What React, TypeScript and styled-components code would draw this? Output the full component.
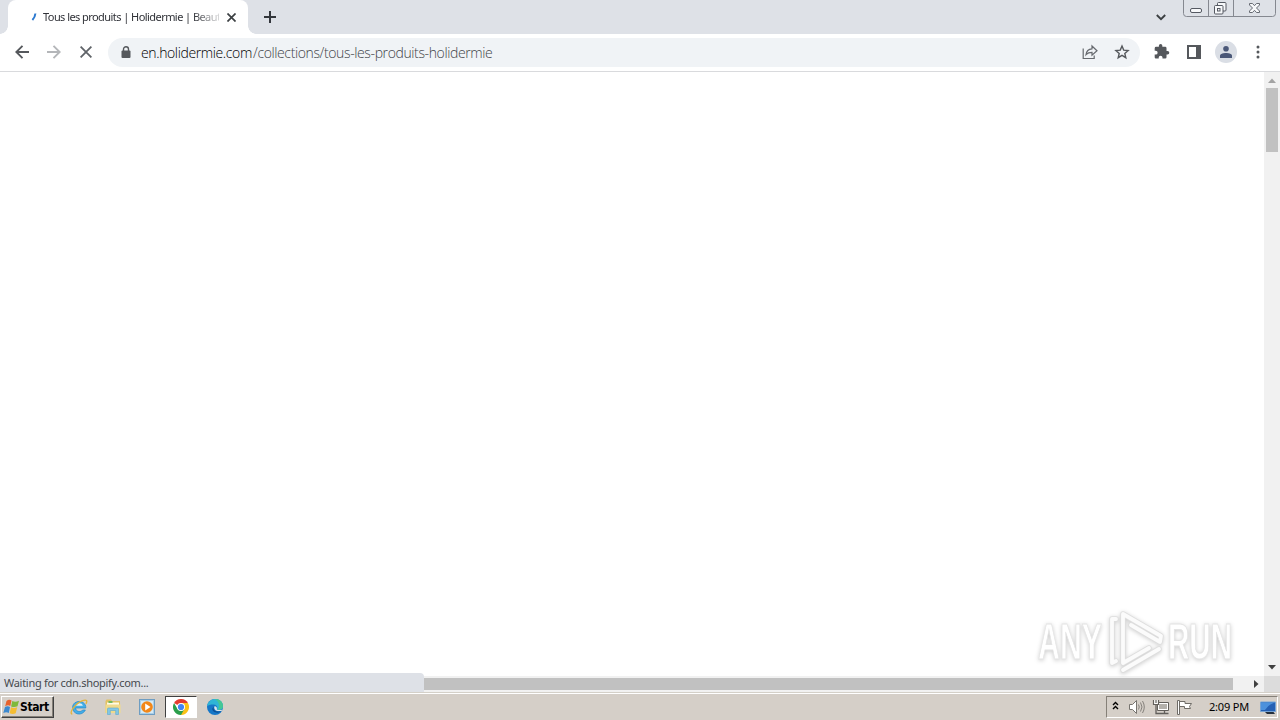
import * as React from "react";
import styled, { createGlobalStyle } from "styled-components";

const App = () => (
  <Screen>
    <GlobalStyle />
    <TabStrip>
      <TabEdge />
      <Tab>
        <Spinner />
        <TabTitle>Tous les produits | Holidermie | Beaut</TabTitle>
        <CloseIcon />
      </Tab>
      <TabEdge right />
      <NewTab>
        <svg width="12" height="12" viewBox="0 0 12 12">
          <path d="M6 0v12M0 6h12" stroke="#33363c" strokeWidth="2" />
        </svg>
      </NewTab>
      <Spacer />
      <TabSearch>
        <svg width="10" height="7" viewBox="0 0 10 7">
          <path d="M.8 1 5 5.2 9.2 1" fill="none" stroke="#3c4043" strokeWidth="1.9" />
        </svg>
      </TabSearch>
      <WindowControls />
    </TabStrip>
    <Toolbar>
      <ToolButton>
        <ArrowIcon color="#55585c" />
      </ToolButton>
      <ToolButton>
        <ArrowIcon color="#b4b6b9" flip />
      </ToolButton>
      <ToolButton>
        <svg width="12" height="12" viewBox="0 0 12 12">
          <path d="m.6.6 10.8 10.8M11.4.6.6 11.4" stroke="#5f6368" strokeWidth="1.8" />
        </svg>
      </ToolButton>
      <AddressBar>
        <LockIcon />
        <Host>en.holidermie.com</Host>
        <Path>/collections/tous-les-produits-holidermie</Path>
        <Spacer />
        <ShareIcon />
        <StarIcon />
      </AddressBar>
      <ToolButton>
        <PuzzleIcon />
      </ToolButton>
      <ToolButton>
        <svg width="14" height="14" viewBox="0 0 14 14">
          <path d="M0 0h14v14H0zM2 2v10h7V2z" fill="#55585c" fillRule="evenodd" />
        </svg>
      </ToolButton>
      <ToolButton>
        <Avatar>
          <svg width="12" height="12" viewBox="0 0 12 12" fill="#4b5878">
            <circle cx="6" cy="2.8" r="2.8" />
            <path d="M0 12V9.8C0 7.8 3.3 7 6 7s6 .8 6 2.8V12z" />
          </svg>
        </Avatar>
      </ToolButton>
      <ToolButton>
        <svg width="4" height="14" viewBox="0 0 4 14" fill="#55585c">
          <circle cx="2" cy="2" r="1.5" />
          <circle cx="2" cy="7" r="1.5" />
          <circle cx="2" cy="12" r="1.5" />
        </svg>
      </ToolButton>
    </Toolbar>
    <Viewport>
      <Page />
      <VerticalBar>
        <ScrollArrow dir="up" faded />
        <VerticalThumb />
        <Spacer />
        <ScrollArrow dir="down" />
      </VerticalBar>
      <HorizontalBar>
        <HorizontalThumb />
        <ScrollArrow dir="right" />
      </HorizontalBar>
      <Corner />
      <Status>Waiting for cdn.shopify.com...</Status>
      <Watermark />
    </Viewport>
    <Taskbar>
      <StartButton>
        <WindowsLogo />
        Start
      </StartButton>
      <QuickLaunch>
        <Task>
          <IeIcon />
        </Task>
        <Task>
          <ExplorerIcon />
        </Task>
        <Task>
          <PlayerIcon />
        </Task>
        <Task active>
          <ChromeIcon />
        </Task>
        <Task>
          <EdgeIcon />
        </Task>
      </QuickLaunch>
      <Spacer />
      <Tray>
        <TrayIcons />
        <Clock>2:09 PM</Clock>
        <DesktopIcon />
      </Tray>
    </Taskbar>
  </Screen>
);

export default App;

//////////
// Icons
//////////
const Spinner = () => (
  <svg width="16" height="16" viewBox="0 0 16 16">
    <path d="M13.4 4.5q-.4 4-3 6.500" fill="none" stroke="#2b78cf" strokeWidth="2" />
  </svg>
);

const CloseIcon = () => (
  <svg width="9" height="9" viewBox="0 0 8 8">
    <path d="m.4.4 7.2 7.2M7.6.4.4 7.6" stroke="#3c4043" strokeWidth="1.5" />
  </svg>
);

const ArrowIcon = ({ color, flip }: { color: string; flip?: boolean }) => (
  <svg width="14" height="14" viewBox="0 0 14 14">
    <path
      d="M14 7H1.5M7.5.8 1.3 7l6.2 6.2"
      transform={flip ? "translate(14) scale(-1 1)" : undefined}
      fill="none"
      stroke={color}
      strokeWidth="1.9"
    />
  </svg>
);

const LockIcon = () => (
  <svg width="10" height="13" viewBox="0 0 10 13">
    <rect x=".5" y="4.5" width="9" height="7.5" rx="1" fill="#55585c" />
    <path d="M2.5 5V3.2a2.5 2.5 0 0 1 5 0V5" fill="none" stroke="#55585c" strokeWidth="1.4" />
  </svg>
);

const ShareIcon = () => (
  <svg width="16" height="16" viewBox="0 0 16 16" fill="none" stroke="#66696e" strokeWidth="1.2">
    <path d="M1.2 4.5v10h11v-3" />
    <path d="M4 10.7c.4-3.8 2.2-5.6 6-5.9V2l5 4.7-5 4.5V8.4c-2.6 0-4.4.6-6 2.3z" />
  </svg>
);

const StarIcon = () => (
  <svg width="16" height="16" viewBox="0 0 16 16">
    <path
      d="m8 2 1.7 4.1 4.4.4-3.3 2.9 1 4.3L8 11.4l-3.8 2.3 1-4.3-3.3-2.9 4.4-.4z"
      fill="none"
      stroke="#55585c"
      strokeWidth="1.4"
    />
  </svg>
);

const PuzzleIcon = () => (
  <svg width="16" height="16" viewBox="1 1 23 23" fill="#55585c">
    <path d="M20.5 11H19V7a2 2 0 0 0-2-2h-4V3.5a2.5 2.5 0 0 0-5 0V5H4a2 2 0 0 0-2 2v3.8h1.5a2.7 2.7 0 0 1 0 5.4H2V20c0 1.100.9 2 2 2h3.8v-1.5a2.7 2.7 0 0 1 5.4 0V22H17a2 2 0 0 0 2-2v-4h1.5a2.5 2.5 0 0 0 0-5z" />
  </svg>
);

const WindowControls = () => (
  <svg width="97" height="18" viewBox="0 0 97 18" fill="none">
    <path d="M.5 0v13.5q0 3 3 3h86q3 0 3-3V0M25.5 0v16M50.5 0v16" stroke="#858890" />
    <rect x="7.5" y="8.5" width="11" height="4" rx="1.5" fill="#f7f8fa" stroke="#555962" />
    <rect x="34.5" y="2.5" width="8.5" height="8.5" rx="1" fill="#f7f8fa" stroke="#555962" />
    <rect x="31.5" y="5.5" width="8.5" height="8.5" rx="1" fill="#f7f8fa" stroke="#555962" />
    <rect x="34.5" y="8.5" width="2.5" height="2.5" stroke="#555962" />
    <path
      d="M66.5 3.500h3l2 2.200 2-2.200h3v1.500L73.500 8l3 3v1.500h-3l-2-2.200-2 2.200h-3V11l3-3-3-3z"
      fill="#f7f8fa"
      stroke="#666a72"
    />
  </svg>
);

const arrowPaths = {
  up: "M4 11 8 6.500l4 4.500z",
  down: "M4 5 8 9.500 12 5z",
  right: "M6 4v8l4.500-4z",
};

const ScrollArrow = ({ dir, faded }: { dir: keyof typeof arrowPaths; faded?: boolean }) => (
  <svg width="16" height="16" viewBox="0 0 16 16">
    <path d={arrowPaths[dir]} fill={faded ? "#a3a3a3" : "#404040"} />
  </svg>
);

const WindowsLogo = () => (
  <svg width="17" height="16" viewBox="0 0 17 16">
    <path d="M3.500 2Q6 0 8.500 1.500L7.300 7Q5 5.600 2.200 7.300z" fill="#e8622c" />
    <path d="M9.300 2q3 1.500 6.700-.3L14.500 7.200q-3 1.500-6.400.2z" fill="#7fb93b" />
    <path d="M2 8Q4.600 6.500 7 8l-1.200 6Q3.400 12.500.3 14z" fill="#3c89cf" />
    <path d="M8 8.300q3 1.400 6.200 0l-1.500 6q-3 1.500-6-.1z" fill="#f5bd32" />
  </svg>
);

const IeIcon = () => (
  <svg width="18" height="18" viewBox="0 0 18 18" fill="none">
    <path
      d="M15.800 10H5.600c.2 4 5.700 4.600 7 2h2.800C12 18.800 2.600 16.500 2.600 9.500c0-8.200 13.700-8.200 13.200.5z"
      fill="#42aee9"
      stroke="#2388ca"
      strokeWidth=".7"
    />
    <path d="M5.700 7.800C6.200 4.600 12.300 4.400 12.800 7.800z" fill="#e3eff5" />
    <path
      d="M2.300 16c-4-.5 3.200-10.700 9.700-13.200 5-2 5.600.2 3.900 3"
      stroke="#e3b43a"
      strokeWidth="1.300"
    />
  </svg>
);

const ExplorerIcon = () => (
  <svg width="18" height="18" viewBox="0 0 18 18">
    <path d="M1.500 3 2.500 1.500h4.500l1 1.500h8V15h-14.500z" fill="#e3c263" />
    <path d="M3 4.500h12V12H3z" fill="#fffbe5" />
    <path d="M4.500 3h4v2h-4z" fill="#73b960" />
    <path d="M1.500 6.500h15V15h-15z" fill="#f0da8c" />
    <path
      d="M3.500 16.500V11q0-1 1-1h9q1 0 1 1v5.500h-2.800v-4H6.300v4z"
      fill="#83c7e5"
      stroke="#5aa9cf"
      strokeWidth=".6"
    />
  </svg>
);

const PlayerIcon = () => (
  <svg width="18" height="18" viewBox="0 0 18 18">
    <rect x="1.500" y="1.500" width="15" height="15" fill="#a9cfe8" stroke="#6e9dc2" />
    <path d="M3 3h12v12H3z" fill="#d6eaf5" />
    <circle cx="9" cy="9" r="5.800" fill="#f28718" />
    <path d="m7.200 5.500 5.300 3.500-5.300 3.500z" fill="#fff" />
  </svg>
);

const ChromeIcon = () => (
  <svg width="16" height="16" viewBox="0 0 16 16">
    <path d="M8 8 1.070 4A8 8 0 0 1 14.930 4z" fill="#e33b2e" />
    <path d="M8 8V4h6.930A8 8 0 0 1 8 16z" fill="#fbc116" />
    <path d="M8 16A8 8 0 0 1 1.070 4L4.540 10 8 8l3.460 2z" fill="#2a9e4b" />
    <circle cx="8" cy="8" r="4" fill="#fff" />
    <circle cx="8" cy="8" r="3.100" fill="#4285f4" />
  </svg>
);

const EdgeIcon = () => (
  <svg width="16" height="16" viewBox="0 0 16 16">
    <circle cx="8" cy="8" r="8" fill="#1677c8" />
    <path
      d="M.2 7C1.500-2.500 15.500-2 16 7c0 3.500-3.500 4.800-6.200 3.300 1.500-2.200-.3-4.800-3.300-4.800C3.300 5.500 1 6.200.2 7z"
      fill="#2fb5d6"
    />
    <path d="M8 .1c5 0 8 3.300 8 7 0 3-2.800 4.200-5.200 3.600C13.500 7 12 3 8 .1z" fill="#45c795" />
    <path d="M7 7.500c-1.500 3 1.200 6.300 7.500 4.800C11 15 5 13.500 5.300 9.500z" fill="#0d4e93" />
    <path
      d="M7.500 7.200c-1 2.500.8 5 4.800 4.800h2.200l1-1.500c-2.200 1-6 .5-5.700-.4.800-1.600-.9-3.300-2.300-2.900z"
      fill="#dce5ea"
    />
  </svg>
);

const TrayIcons = () => (
  <svg width="88" height="18" viewBox="0 0 88 18" fill="none">
    <path d="M3 7 5.500 4.500 8 7M3 11 5.500 8.500 8 11" stroke="#000" strokeWidth="1.400" />
    <path d="M19.500 6.500h3l4-4v13l-4-4h-3z" fill="#fff" stroke="#77746f" />
    <path d="M28.500 6.500q1.500 2.500 0 5M30.500 4.500q3 4.500 0 9M32.500 3q3.600 6 0 12" stroke="#85817c" />
    <path d="M47.500 4.500h11v8h-11z" fill="#fff" stroke="#625f5b" />
    <path d="M49 6h8v5h-8z" fill="#b3b0ab" />
    <path d="M51 15.500h7.500M54.500 13v2" stroke="#625f5b" strokeWidth="1.300" />
    <path d="M46 7v8.500h5" stroke="#625f5b" strokeWidth="1.300" />
    <path d="M43.500 2v4.500h5V2M46 2v3" fill="#fff" stroke="#625f5b" strokeWidth="1.200" />
    <path
      d="M67.500 2.500h2v14h-2zM69.500 3.500h5.500v2h6.500l-2 3 1 2h-6v-2h-5z"
      fill="#fff"
      stroke="#6f6c67"
    />
  </svg>
);

const DesktopIcon = () => (
  <svg width="16" height="15" viewBox="0 0 16 15">
    <path d="M.5 2h15v9.500H.5z" fill="#2560b4" stroke="#75a3d5" />
    <path d="M1 2.500h14Q9 4 5 10H1z" fill="#4c91dc" />
    <path d="M5 12h8.500l1.500 2H7z" fill="#242f3d" />
  </svg>
);

const Watermark = () => (
  <WatermarkBox>
    <svg width="210" height="72" viewBox="0 0 210 72">
      <g
        fill="#fff"
        fontFamily="'Liberation Sans', sans-serif"
        fontSize="50"
        fontWeight="bold"
        stroke="#e4e4e4"
        strokeWidth="1"
      >
        <text x="8" y="53" textLength="64" lengthAdjust="spacingAndGlyphs">
          ANY
        </text>
        <text x="138" y="53" textLength="64" lengthAdjust="spacingAndGlyphs">
          RUN
        </text>
      </g>
      <g fill="none" strokeLinejoin="round" strokeLinecap="round">
        <path d={markPath} stroke="#dedede" strokeWidth="5.500" />
        <path d={markPath} stroke="#fbfbfb" strokeWidth="3.800" />
      </g>
    </svg>
  </WatermarkBox>
);

const markPath = "M119 42 93 57V8l38 22-1 6-29-17M86 13h-4v44l4-2M93 64l36-21";

//////////
// Style
//////////
const GlobalStyle = createGlobalStyle`
  body {
    margin: 0;
    overflow: hidden;
    font-family: "DejaVu Sans Condensed", "DejaVu Sans", sans-serif;
  }

  svg {
    display: block;
    flex: none;
  }
`;

const Screen = styled.div`
  display: flex;
  flex-direction: column;
  width: 1280px;
  height: 720px;
  background: #fff;
`;

const Spacer = styled.div`
  flex: 1;
`;

const TabStrip = styled.div`
  display: flex;
  height: 34px;
  background: #dee1e7;
`;

const TabEdge = styled.div<{ right?: boolean }>`
  width: 8px;
  height: 34px;
  background: ${(p) =>
    `radial-gradient(circle at ${p.right ? "8px" : "0px"} 0, #dee1e7 7.5px, #fff 8px) 0 26px / 8px 8px no-repeat`};
`;

const Tab = styled.div`
  display: flex;
  align-items: center;
  box-sizing: border-box;
  width: 240px;
  padding: 0 12px 0 14px;
  background: #fff;
  border-radius: 8px 8px 0 0;
`;

const TabTitle = styled.div`
  width: 176px;
  margin: 0 8px 0 5px;
  white-space: nowrap;
  font-family: "Noto Sans", sans-serif;
  font-size: 11px;
  line-height: 16px;
  letter-spacing: -0.56px;
  color: #303238;
  mask-image: linear-gradient(90deg, #000 150px, transparent 182px);
`;

const NewTab = styled.div`
  padding: 11px 8px;
`;

const TabSearch = styled.div`
  padding: 14px 17px 0 0;
`;

const Toolbar = styled.div`
  display: flex;
  align-items: center;
  box-sizing: border-box;
  height: 38px;
  padding: 0 6px 1px;
  border-bottom: 1px solid #d9dadd;
`;

const ToolButton = styled.div`
  display: flex;
  align-items: center;
  justify-content: center;
  width: 32px;
  height: 32px;
`;

const AddressBar = styled.div`
  display: flex;
  align-items: center;
  box-sizing: border-box;
  width: 1032px;
  height: 29px;
  margin: 0 6px;
  padding: 0 10px 0 13px;
  border-radius: 15px;
  background: #f0f3f6;
  font-family: "Open Sans", "Noto Sans", sans-serif;
  font-size: 14px;
  font-weight: 300;

  svg + svg {
    margin-left: 16px;
  }
`;

const Host = styled.span`
  width: 112px;
  margin-left: 10px;
  white-space: nowrap;
  letter-spacing: -0.38px;
  color: #000;
`;

const Path = styled.span`
  white-space: nowrap;
  letter-spacing: -0.38px;
  color: #3f4349;
`;

const Avatar = styled.div`
  display: flex;
  align-items: center;
  justify-content: center;
  width: 22px;
  height: 22px;
  border-radius: 50%;
  background: #dadee5;
`;

const Viewport = styled.div`
  position: relative;
  display: grid;
  grid-template: 604px 16px / 1264px 16px;
`;

const Page = styled.main`
  background: #fff;
`;

const VerticalBar = styled.div`
  display: flex;
  flex-direction: column;
  background: #f1f1f1;
`;

const VerticalThumb = styled.div`
  width: 12px;
  height: 64px;
  margin: 0 2px;
  background: #c1c1c1;
`;

const HorizontalBar = styled.div`
  display: flex;
  justify-content: flex-end;
  align-items: center;
  background: #f1f1f1;
`;

const HorizontalThumb = styled.div`
  width: 1217px;
  height: 12px;
  margin-right: 15px;
  background: #c1c1c1;
`;

const Corner = styled.div`
  background: #dcdcdc;
`;

const Status = styled.div`
  position: absolute;
  left: 0;
  bottom: 0;
  box-sizing: border-box;
  width: 424px;
  height: 19px;
  padding-left: 4px;
  border-radius: 0 4px 0 0;
  background: #dee1e7;
  font-family: "Noto Sans", sans-serif;
  font-size: 11px;
  line-height: 20px;
  letter-spacing: -0.29px;
  color: #46494e;
`;

const WatermarkBox = styled.div`
  position: absolute;
  left: 1030px;
  top: 534px;
  filter: drop-shadow(0 1px 2px rgba(0, 0, 0, 0.2));
`;

const Taskbar = styled.div`
  display: flex;
  align-items: center;
  box-sizing: border-box;
  height: 28px;
  padding: 1px 1px 0;
  border-top: 1px solid #d4d0c8;
  box-shadow: inset 0 1px #fff;
  background: #d5cfc8;
`;

const StartButton = styled.div`
  display: flex;
  align-items: center;
  box-sizing: border-box;
  width: 53px;
  height: 22px;
  padding-left: 1px;
  border: 1px solid;
  border-color: #fff #404040 #404040 #fff;
  box-shadow: inset -1px -1px #858078;
  font-size: 12px;
  font-weight: bold;
  letter-spacing: -0.4px;
  color: #000;
`;

const QuickLaunch = styled.div`
  display: flex;
  gap: 2px;
  margin-left: 9px;
`;

const Task = styled.div<{ active?: boolean }>`
  display: flex;
  align-items: center;
  justify-content: center;
  box-sizing: border-box;
  width: 32px;
  height: 22px;
  border: 1px solid;
  border-color: ${(p) => (p.active ? "#404040 #fff #fff #404040" : "transparent")};
  background: ${(p) => (p.active ? "#fff" : "transparent")};
`;

const Tray = styled.div`
  display: flex;
  align-items: center;
  box-sizing: border-box;
  width: 172px;
  height: 22px;
  padding-left: 3px;
  margin-right: 1px;
  border: 1px solid;
  border-color: #858078 #fff #fff #858078;
`;

const Clock = styled.span`
  width: 50px;
  margin: 0 1px 1px 11px;
  white-space: nowrap;
  font-family: "Noto Sans", sans-serif;
  font-size: 11px;
  letter-spacing: -0.2px;
  color: #000;
`;
